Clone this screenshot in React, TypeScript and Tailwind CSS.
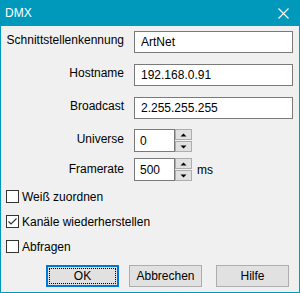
import React from "react";

function Spinner() {
  return (
    <div className="flex flex-col w-[17px] h-[23px]">
      <div className="h-[11px] border border-[#adadad] bg-[#e1e1e1] flex items-center justify-center">
        <svg width="7" height="4" viewBox="0 0 7 4"><path d="M0.5 3.5 L3.5 0.5 L6.5 3.5 Z" fill="#000" /></svg>
      </div>
      <div className="h-[11px] mt-px border border-[#adadad] bg-[#e1e1e1] flex items-center justify-center">
        <svg width="7" height="4" viewBox="0 0 7 4"><path d="M0.5 0.5 L3.5 3.5 L6.5 0.5 Z" fill="#000" /></svg>
      </div>
    </div>
  );
}

function Check({ label, checked, mt }: { label: string; checked?: boolean; mt: string }) {
  return (
    <div className={`flex items-center h-[13px] ml-[5px] ${mt}`}>
      <div className="w-[13px] h-[13px] border border-[#333] bg-white flex items-center justify-center">
        {checked && (
          <svg width="11" height="11" viewBox="0 0 11 11">
            <path d="M1.5 5.5 L4 8 L9.5 2.5" stroke="#333" strokeWidth="1.2" fill="none" />
          </svg>
        )}
      </div>
      <span className="ml-[3px] leading-none">{label}</span>
    </div>
  );
}

export default function App() {
  return (
    <div className="w-[300px] h-[293px] flex flex-col bg-[#0099bc] px-px pb-px font-['Liberation_Sans',Arial,sans-serif] text-[12px] text-black">
      <div className="h-[26px] flex items-center justify-between pl-[4px] pr-[10px] text-white shrink-0">
        <span className="text-[12px] leading-none">DMX</span>
        <svg width="11" height="11" viewBox="0 0 11 11">
          <path d="M0.5 0.5 L10.5 10.5 M10.5 0.5 L0.5 10.5" stroke="#fff" strokeWidth="1.1" />
        </svg>
      </div>
      <div className="flex-1 bg-[#f0f0f0] flex flex-col">
        <div className="flex items-center mt-[5px] h-[22px]">
          <span className="w-[123px] text-right -mt-[5px]">Schnittstellenkennung</span>
          <div className="ml-[10px] w-[159px] h-[22px] border border-[#7a7a7a] bg-white flex items-center pl-[6px] text-[12px]">ArtNet</div>
        </div>
        <div className="flex items-center mt-[11px] h-[22px]">
          <span className="w-[123px] text-right -mt-[5px]">Hostname</span>
          <div className="ml-[10px] w-[159px] h-[22px] border border-[#7a7a7a] bg-white flex items-center pl-[6px]">192.168.0.91</div>
        </div>
        <div className="flex items-center mt-[11px] h-[22px]">
          <span className="w-[123px] text-right -mt-[5px]">Broadcast</span>
          <div className="ml-[10px] w-[159px] h-[22px] border border-[#7a7a7a] bg-white flex items-center pl-[6px]">2.255.255.255</div>
        </div>
        <div className="flex items-center mt-[10px] h-[23px]">
          <span className="w-[123px] text-right -mt-[3px]">Universe</span>
          <div className="ml-[10px] w-[41px] h-[23px] border border-[#7a7a7a] bg-white flex items-center pl-[5px]">0</div>
          <Spinner />
        </div>
        <div className="flex items-center mt-[6px] h-[23px]">
          <span className="w-[123px] text-right -mt-[1px]">Framerate</span>
          <div className="ml-[10px] w-[41px] h-[23px] border border-[#7a7a7a] bg-white flex items-center pl-[5px]">500</div>
          <Spinner />
          <span className="ml-[5px]">ms</span>
        </div>
        <Check label="Weiß zuordnen" mt="mt-[9px]" />
        <Check label="Kanäle wiederherstellen" checked mt="mt-[12px]" />
        <Check label="Abfragen" mt="mt-[12px]" />
        <div className="flex mt-[12px] h-[22px]">
          <div className="ml-[45px] w-[73px] h-[22px] border-2 border-[#0078d7] bg-[#e1e1e1] p-px">
            <div className="w-full h-full border border-dotted border-black flex items-center justify-center">OK</div>
          </div>
          <div className="ml-[10px] w-[73px] h-[22px] border border-[#adadad] bg-[#e1e1e1] flex items-center justify-center">Abbrechen</div>
          <div className="ml-[14px] w-[73px] h-[22px] border border-[#adadad] bg-[#e1e1e1] flex items-center justify-center">Hilfe</div>
        </div>
      </div>
    </div>
  );
}
